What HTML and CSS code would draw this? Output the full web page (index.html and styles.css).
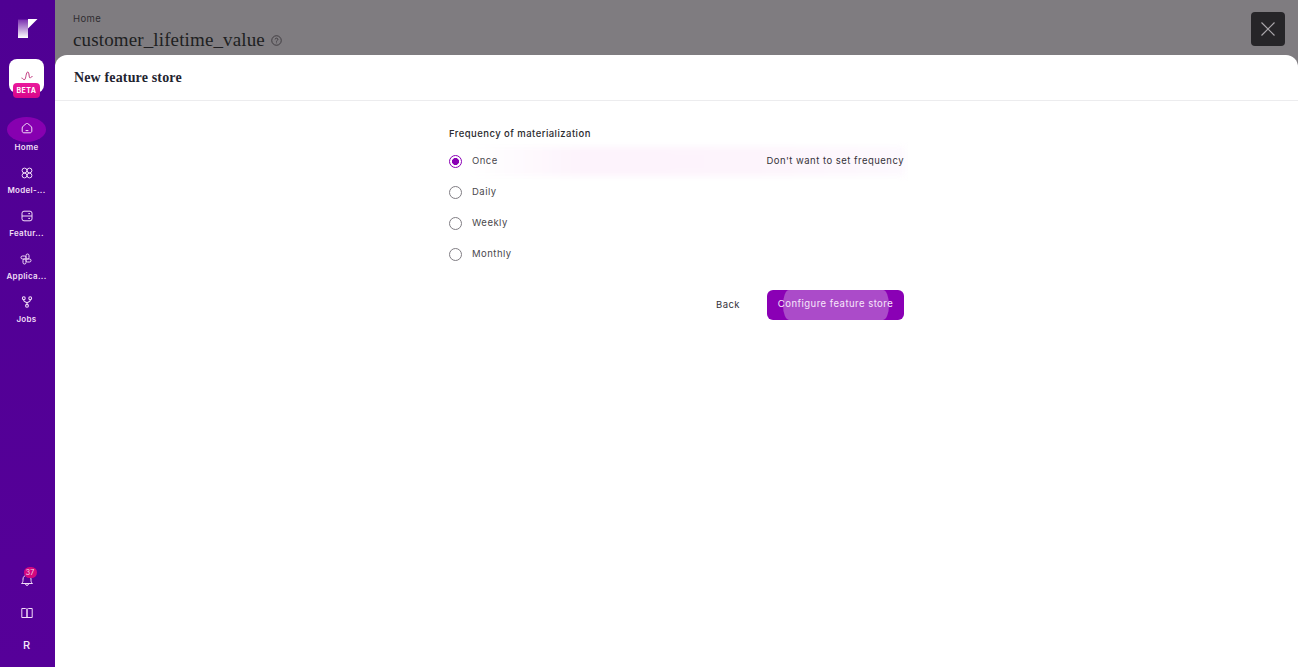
FILE: index.html
```html
<!DOCTYPE html>
<html lang="en">
<head>
    <meta charset="UTF-8">
    <meta name="viewport" content="width=device-width, initial-scale=1.0">
    <title>New feature store</title>
    <link rel="stylesheet" href="styles.css">
</head>
<body>
    <div class="app">
        <nav class="sidebar">
            <svg class="logo" width="22" height="20" viewBox="0 0 22 20">
                <defs>
                    <linearGradient id="logoFade" x1="0" y1="0" x2="0" y2="1">
                        <stop offset="0" stop-color="#7a2fb0"/>
                        <stop offset="1" stop-color="#ffffff"/>
                    </linearGradient>
                </defs>
                <path d="M1 1.5H11V20H1Z" fill="url(#logoFade)"/>
                <path d="M11 1H20.5L11 10.5Z" fill="#ffffff"/>
            </svg>

            <div class="app-badge">
                <svg width="14" height="14" viewBox="0 0 14 14" fill="none" stroke="#c2387f" stroke-width="1">
                    <path d="M1.5 9C3 9 3.5 11.5 4.8 10.5C6 9.5 6 3 7.8 3C9.4 3 8.8 9 10 9C10.8 9 11 7.5 12.5 7.5"/>
                </svg>
                <span class="beta">BETA</span>
            </div>

            <a class="nav-item active">
                <span class="nav-icon">
                    <svg width="12" height="12" viewBox="0 0 12 12" fill="none" stroke="#f3dcf8" stroke-width="1">
                        <path d="M1.2 9V6C1.2 5.2 1.6 4.6 2.2 4.1L5 1.8C5.6 1.3 6.4 1.3 7 1.8L9.8 4.1C10.4 4.6 10.8 5.2 10.8 6V9C10.8 10.1 10.1 10.8 9 10.8H3C1.9 10.8 1.2 10.1 1.2 9Z"/>
                        <path d="M4.6 8.6H7.4"/>
                    </svg>
                </span>
                <span class="nav-label">Home</span>
            </a>
            <a class="nav-item">
                <span class="nav-icon">
                    <svg width="12" height="12" viewBox="0 0 12 12" fill="none" stroke="#f3dcf8" stroke-width="1">
                        <circle cx="3.5" cy="3.5" r="2.4"/>
                        <circle cx="8.5" cy="3.5" r="2.4"/>
                        <circle cx="3.5" cy="8.5" r="2.4"/>
                        <circle cx="8.5" cy="8.5" r="2.4"/>
                    </svg>
                </span>
                <span class="nav-label">Model-...</span>
            </a>
            <a class="nav-item">
                <span class="nav-icon">
                    <svg width="12" height="12" viewBox="0 0 12 12" fill="none" stroke="#f3dcf8" stroke-width="1">
                        <rect x="1" y="1.2" width="10" height="9.6" rx="2"/>
                        <path d="M1 6H11M7.3 3.6H9M7.3 8.4H9"/>
                    </svg>
                </span>
                <span class="nav-label">Featur...</span>
            </a>
            <a class="nav-item">
                <span class="nav-icon">
                    <svg width="12" height="12" viewBox="0 0 12 12" fill="none" stroke="#f3dcf8" stroke-width="1">
                        <rect x="6" y="1" width="3" height="5" rx="1.5"/>
                        <rect x="6" y="6" width="5" height="3" rx="1.5"/>
                        <rect x="3" y="6" width="3" height="5" rx="1.5"/>
                        <rect x="1" y="3" width="5" height="3" rx="1.5"/>
                    </svg>
                </span>
                <span class="nav-label">Applica...</span>
            </a>
            <a class="nav-item">
                <span class="nav-icon">
                    <svg width="12" height="12" viewBox="0 0 12 12" fill="none" stroke="#f3dcf8" stroke-width="1.1">
                        <circle cx="2.8" cy="2.2" r="1.4"/>
                        <circle cx="9.2" cy="2.2" r="1.4"/>
                        <circle cx="6" cy="9.8" r="1.4"/>
                        <path d="M2.8 3.6V4.4C2.8 6 6 5.8 6 7.2V8.4M9.2 3.6V4.4C9.2 6 6 5.8 6 7.2"/>
                    </svg>
                </span>
                <span class="nav-label">Jobs</span>
            </a>

            <div class="sidebar-bottom">
                <span class="side-btn bell">
                    <svg width="14" height="14" viewBox="0 0 14 14" fill="none" stroke="#f3dcf8" stroke-width="1">
                        <path d="M1.5 10.5C3 9.5 3 8 3 6C3 3.8 4.8 2.2 7 2.2C9.2 2.2 11 3.8 11 6C11 8 11 9.5 12.5 10.5Z" stroke-linejoin="round"/>
                        <path d="M5.6 11A1.4 1.4 0 0 0 8.4 11"/>
                    </svg>
                    <span class="count">37</span>
                </span>
                <span class="side-btn">
                    <svg width="12" height="12" viewBox="0 0 12 12" fill="none" stroke="#f3dcf8" stroke-width="1">
                        <path d="M.8 1.5H4.5C5.4 1.5 6 2 6 3V10.5H.8ZM11.2 1.5H7.5C6.6 1.5 6 2 6 3V10.5H11.2Z"/>
                    </svg>
                </span>
                <span class="side-btn avatar">R</span>
            </div>
        </nav>

        <main class="content">
            <div class="crumb">Home</div>
            <h1 class="page-title">
                customer_lifetime_value
                <svg width="11" height="11" viewBox="0 0 12 12" fill="none" stroke="#3c393d" stroke-width="1">
                    <circle cx="6" cy="6" r="5.2"/>
                    <path d="M4.5 4.8C4.5 3 7.5 3 7.5 4.8C7.5 6 6 5.8 6 7.2M6 8.2V9"/>
                </svg>
            </h1>
        </main>
    </div>

    <span class="close-btn">
        <svg width="16" height="16" viewBox="0 0 16 16" fill="none" stroke="#a9a6aa" stroke-width="1.2">
            <path d="M1.5 1.5L14.5 14.5M14.5 1.5L1.5 14.5"/>
        </svg>
    </span>

    <section class="modal">
        <header class="modal-head">New feature store</header>
        <form class="freq-form">
            <div class="freq-title">Frequency of materialization</div>

            <div class="option selected">
                <span class="radio"></span>
                <span class="option-label">Once</span>
                <span class="option-hint">Don't want to set frequency</span>
            </div>
            <div class="option">
                <span class="radio"></span>
                <span class="option-label">Daily</span>
            </div>
            <div class="option">
                <span class="radio"></span>
                <span class="option-label">Weekly</span>
            </div>
            <div class="option">
                <span class="radio"></span>
                <span class="option-label">Monthly</span>
            </div>

            <div class="actions">
                <button type="button" class="btn-back">Back</button>
                <button type="button" class="btn-primary"><span>Configure feature store</span></button>
            </div>
        </form>
    </section>
</body>
</html>
```

FILE: styles.css
```css
* {
    box-sizing: border-box;
}

body {
    margin: 0;
    height: 667px;
    overflow: hidden;
    font-family: Inter, "Open Sans", sans-serif;
    background-color: #7f7c80;
    color: #2b2a2e;
}

.app {
    display: flex;
    height: 667px;
}

.sidebar {
    width: 55px;
    display: flex;
    flex-direction: column;
    align-items: center;
    padding: 18px 2px 0 0;
    background: linear-gradient(180deg, #4f0093 0%, #560099 100%);
}

.logo {
    margin-left: 2px;
}

.app-badge {
    position: relative;
    width: 35px;
    height: 34px;
    margin-top: 21px;
    padding-top: 8px;
    text-align: center;
    background-color: #ffffff;
    border-radius: 8px;
}

.beta {
    position: absolute;
    left: 4px;
    top: 24px;
    width: 27px;
    height: 15px;
    font-size: 7px;
    font-weight: 700;
    line-height: 15px;
    letter-spacing: 0.5px;
    color: #ffffff;
    background: linear-gradient(180deg, #ea1a9c, #d8058a);
    border-radius: 4px;
}

.nav-item {
    display: flex;
    flex-direction: column;
    align-items: center;
    height: 43px;
}

.nav-item.active {
    margin-top: 24px;
}

.nav-icon {
    display: flex;
    align-items: center;
    justify-content: center;
    width: 39px;
    height: 25px;
}

.nav-item.active .nav-icon {
    padding-bottom: 3px;
    background-color: #8700b0;
    border-radius: 50%;
}

.nav-label {
    margin-top: -1px;
    font-size: 8px;
    font-weight: 600;
    line-height: 12px;
    letter-spacing: 0.3px;
    color: #f0def6;
    white-space: nowrap;
}

.sidebar-bottom {
    margin-top: auto;
    display: flex;
    flex-direction: column;
    align-items: center;
    gap: 18.5px;
    padding-bottom: 15px;
}

.side-btn {
    display: flex;
    align-items: center;
    justify-content: center;
    width: 16px;
    height: 14px;
}

.bell {
    position: relative;
}

.count {
    position: absolute;
    left: 5px;
    top: -6px;
    width: 13px;
    height: 11px;
    font-size: 7px;
    line-height: 11px;
    text-align: center;
    color: #f7d9ec;
    background-color: #d4087f;
    border-radius: 6px;
}

.avatar {
    font-size: 11px;
    font-weight: 500;
    color: #f5e8fa;
}

.content {
    flex: 1;
    padding: 13px 18px;
}

.crumb {
    font-size: 9.5px;
    line-height: 12px;
    letter-spacing: 0.35px;
    color: #2f2d31;
}

.page-title {
    display: flex;
    align-items: center;
    gap: 6px;
    margin: 3px 0 0;
    font-family: "Liberation Serif", serif;
    font-size: 19px;
    font-weight: 400;
    line-height: 24px;
    letter-spacing: 0.13px;
    color: #201f22;
}

.close-btn {
    position: absolute;
    left: 1251px;
    top: 12px;
    display: flex;
    align-items: center;
    justify-content: center;
    width: 34px;
    height: 34px;
    background-color: #262528;
    border-radius: 4px;
}

.modal {
    position: absolute;
    z-index: 0;
    left: 55px;
    top: 55px;
    width: 1243px;
    height: 612px;
    background-color: #ffffff;
    border-radius: 12px 12px 0 0;
}

.modal-head {
    height: 46px;
    padding-left: 19px;
    font-family: "Liberation Serif", serif;
    font-size: 14px;
    font-weight: 700;
    line-height: 45px;
    letter-spacing: 0.15px;
    color: #1f2430;
    border-bottom: 1px solid #ececee;
}

.freq-form {
    width: 455px;
    margin-left: 394px;
    padding-top: 26px;
}

.freq-title {
    margin-bottom: 5px;
    font-size: 9.5px;
    line-height: 14px;
    letter-spacing: 0.45px;
    font-weight: 500;
    color: #2b2a2e;
}

.option {
    position: relative;
    display: flex;
    align-items: center;
    height: 31px;
    font-size: 9.5px;
    letter-spacing: 0.48px;
    color: #4a484d;
}

/* soft highlight behind the selected row */
.option.selected::before {
    content: "";
    position: absolute;
    inset: 1px -1px;
    z-index: -1;
    background: linear-gradient(90deg, #ffffff 5%, #fdf3fc 30%, #fdf4fc 65%, #fdf9fe 100%);
    filter: blur(3px);
}

.radio {
    width: 13px;
    height: 13px;
    margin-right: 10px;
    border: 1.5px solid #807d83;
    border-radius: 50%;
}

.selected .radio {
    border-color: #8a00b5;
    background: radial-gradient(circle, #8a00b5 0 3.2px, #ffffff 3.8px);
}

.option-label,
.option-hint {
    padding-bottom: 2px;
}

.option-hint {
    margin-left: auto;
    color: #35333a;
}

.actions {
    display: flex;
    justify-content: flex-end;
    align-items: center;
    gap: 12px;
    margin-top: 20px;
}

.btn-back,
.btn-primary {
    height: 30px;
    border: none;
    font-family: inherit;
    font-size: 9.5px;
    letter-spacing: 0.48px;
}

.btn-back {
    width: 54px;
    padding: 0 0 2px;
    background: none;
    color: #35333a;
}

.btn-primary {
    display: flex;
    justify-content: center;
    width: 137px;
    padding: 0;
    color: #f7e6fb;
    background-color: #8a00b5;
    border-radius: 6px;
}

.btn-primary span {
    width: 106px;
    height: 30px;
    line-height: 27px;
    white-space: nowrap;
    display: flex;
    justify-content: center;
    background-color: #ab4bc9;
    border-radius: 6px / 50%;
}
```
